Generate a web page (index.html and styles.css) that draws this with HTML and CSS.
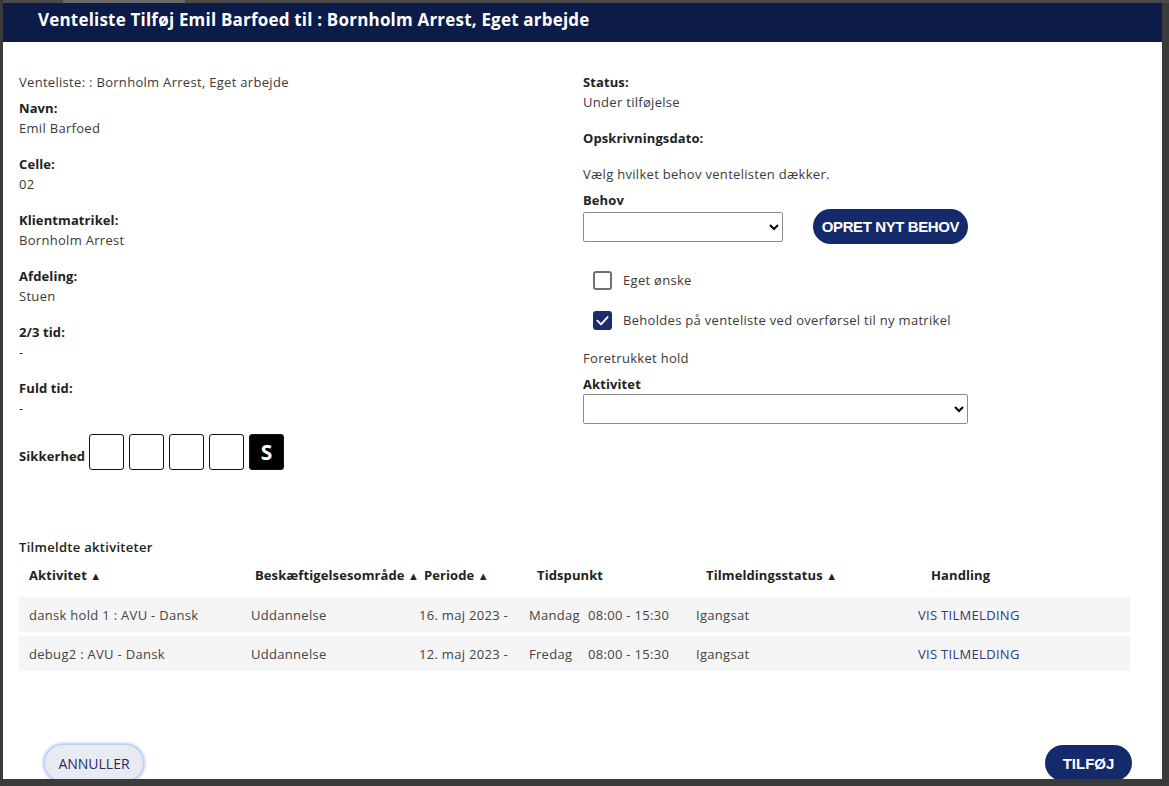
FILE: index.html
```html
<!DOCTYPE html>
<html lang="da">
<head>
<meta charset="utf-8">
<title>Venteliste</title>
<link rel="stylesheet" href="styles.css">
</head>
<body>
<div class="topstrip"><span class="toptab"></span></div>
<div class="modal">
  <div class="modal-header">Venteliste Tilføj Emil Barfoed til : Bornholm Arrest, Eget arbejde</div>
  <div class="modal-body">
    <div class="cols">
      <div class="col-left">
        <div class="intro">Venteliste: : Bornholm Arrest, Eget arbejde</div>
        <div class="field"><div class="label">Navn:</div><div class="value">Emil Barfoed</div></div>
        <div class="field"><div class="label">Celle:</div><div class="value">02</div></div>
        <div class="field"><div class="label">Klientmatrikel:</div><div class="value">Bornholm Arrest</div></div>
        <div class="field"><div class="label">Afdeling:</div><div class="value">Stuen</div></div>
        <div class="field"><div class="label">2/3 tid:</div><div class="value">-</div></div>
        <div class="field"><div class="label">Fuld tid:</div><div class="value">-</div></div>
        <div class="security">
          <span class="label">Sikkerhed</span>
          <span class="sbox"></span><span class="sbox"></span><span class="sbox"></span><span class="sbox"></span><span class="sbox on">S</span>
        </div>
      </div>
      <div class="col-right">
        <div class="field"><div class="label">Status:</div><div class="value">Under tilføjelse</div></div>
        <div class="field"><div class="label">Opskrivningsdato:</div></div>
        <div class="plain">Vælg hvilket behov ventelisten dækker.</div>
        <div class="label lbl-behov">Behov</div>
        <div class="behov-row">
          <select class="select select-behov"><option></option></select>
          <button class="btn btn-primary btn-opret">OPRET NYT BEHOV</button>
        </div>
        <div class="checks">
          <label class="check"><span class="cbox"></span><span>Eget ønske</span></label>
          <label class="check"><span class="cbox checked"><svg viewBox="0 0 20 20" width="20" height="20"><path d="M4.6 10.2 L8.4 14 L15.4 6.4" fill="none" stroke="#fff" stroke-width="2" stroke-linecap="round" stroke-linejoin="round"/></svg></span><span>Beholdes på venteliste ved overførsel til ny matrikel</span></label>
        </div>
        <div class="plain">Foretrukket hold</div>
        <div class="label lbl-akt">Aktivitet</div>
        <select class="select select-akt"><option></option></select>
      </div>
    </div>

    <div class="table-section">
      <div class="table-title">Tilmeldte aktiviteter</div>
      <div class="tbl">
        <div class="tr th">
          <div class="c1">Aktivitet <span class="arrow">▲</span></div>
          <div class="c2">Beskæftigelsesområde <span class="arrow">▲</span></div>
          <div class="c3">Periode <span class="arrow">▲</span></div>
          <div class="c4">Tidspunkt</div>
          <div class="c5">Tilmeldingsstatus <span class="arrow">▲</span></div>
          <div class="c6">Handling</div>
        </div>
        <div class="tr td">
          <div class="c1">dansk hold 1 : AVU - Dansk</div>
          <div class="c2">Uddannelse</div>
          <div class="c3">16. maj 2023 -</div>
          <div class="c4"><span class="day">Mandag</span><span>08:00 - 15:30</span></div>
          <div class="c5">Igangsat</div>
          <div class="c6"><a class="link">VIS TILMELDING</a></div>
        </div>
        <div class="tr td">
          <div class="c1">debug2 : AVU - Dansk</div>
          <div class="c2">Uddannelse</div>
          <div class="c3">12. maj 2023 -</div>
          <div class="c4"><span class="day">Fredag</span><span>08:00 - 15:30</span></div>
          <div class="c5">Igangsat</div>
          <div class="c6"><a class="link">VIS TILMELDING</a></div>
        </div>
      </div>
    </div>

    <div class="footer">
      <button class="btn btn-secondary">ANNULLER</button>
      <button class="btn btn-primary btn-add">TILFØJ</button>
    </div>
  </div>
</div>
</body>
</html>
```
FILE: styles.css
```css
* { box-sizing: border-box; }
html, body { margin: 0; padding: 0; }
body {
  background: #3b3b3b;
  width: 1169px;
  height: 786px;
  overflow: hidden;
  font-family: "Open Sans", Lato, sans-serif;
  font-size: 13px;
  letter-spacing: 0.3px;
  color: #3a3a3a;
  padding: 0 0 0 3px;
}
.topstrip {
  height: 3px;
  background: #4a4a4a;
  display: flex;
}
.toptab {
  margin-left: 60px;
  width: 122px;
  background: #6a6a6a;
}
.modal {
  width: 1159px;
  height: 776px;
  background: #fff;
  overflow: hidden;
  display: flex;
  flex-direction: column;
}
.modal-header {
  height: 39px;
  flex: none;
  background: #0d1b48;
  color: #fff;
  font-weight: 700;
  font-size: 17px;
  letter-spacing: 0.2px;
  line-height: 34px;
  padding-left: 35px;
}
.modal-body {
  padding: 30px 16px 0 16px;
}
.cols {
  display: grid;
  grid-template-columns: 564px 1fr;
}
.intro, .label, .value, .plain { line-height: 20px; }
.label { font-weight: 700; color: #222; letter-spacing: 0.1px; }
.intro { margin-bottom: 6px; }
.field { margin-bottom: 16px; }
.col-left .field:last-of-type { margin-bottom: 18px; }
.security {
  display: flex;
  align-items: center;
  gap: 5px;
}
.security .label { margin-top: 8px; margin-right: -1px; }
.sbox {
  width: 35px;
  height: 36px;
  border: 1px solid #111;
  border-radius: 3px;
  background: #fff;
  display: inline-flex;
  align-items: center;
  justify-content: center;
}
.sbox.on {
  background: #000;
  color: #fff;
  font-weight: 700;
  font-size: 21px;
}
.plain { color: #3a3a3a; }
.lbl-behov { margin-top: 6px; }
.behov-row {
  display: flex;
  align-items: center;
  gap: 30px;
  margin-top: -1px;
}
.select {
  height: 30px;
  border: 1px solid #8a8a8a;
  border-radius: 2px;
  background: #fff;
  font-family: inherit;
  font-size: 13px;
}
.select-behov { width: 200px; }
.select-akt { width: 385px; display: block; }
.btn {
  border: none;
  border-radius: 18px;
  font-family: "Liberation Sans", Arial, sans-serif;
  cursor: pointer;
}
.btn-primary {
  background: #152a6b;
  color: #fff;
  font-weight: 700;
}
.btn-opret {
  width: 155px;
  height: 35px;
  font-size: 15px;
  letter-spacing: -0.4px;
  padding: 0;
}
.checks {
  margin-top: 26px;
  padding-left: 10px;
  display: flex;
  flex-direction: column;
  gap: 20px;
  margin-bottom: 18px;
}
.check {
  display: flex;
  align-items: center;
  gap: 11px;
  line-height: 20px;
  height: 20px;
}
.cbox {
  width: 19px;
  height: 19px;
  border: 2px solid #707070;
  border-radius: 3px;
  background: #fff;
  display: inline-flex;
  align-items: center;
  justify-content: center;
  flex: none;
}
.cbox.checked {
  background: #1b2d6b;
  border-color: #1b2d6b;
}
.cbox svg { width: 19px; height: 19px; flex: none; }
.lbl-akt { margin-top: 6px; }

.table-section {
  margin-top: 67px;
  width: 1111px;
}
.table-title {
  line-height: 20px;
  color: #222;
  font-weight: 600;
}
.tbl {
  display: flex;
  flex-direction: column;
  gap: 4px;
}
.tr {
  display: grid;
  grid-template-columns: 222px 168px 110px 167px 222px 222px;
  align-items: center;
  white-space: nowrap;
}
.th {
  height: 36px;
  font-weight: 700;
  color: #222;
  letter-spacing: 0.1px;
}
.arrow { font-size: 11px; }
.td {
  height: 35px;
  background: #f5f5f5;
  color: #444;
}
.td > div { padding-left: 10px; }
.th .c1 { padding-left: 10px; }
.th .c2 { padding-left: 14px; }
.th .c3 { padding-left: 15px; }
.th .c4 { padding-left: 18px; }
.th .c5 { padding-left: 20px; }
.th .c6 { padding-left: 23px; }
.day { display: inline-block; width: 59px; }
.link { color: #2b3b7c; text-decoration: none; }

.footer {
  margin-top: 74px;
  display: flex;
  justify-content: space-between;
  padding-left: 26px;
  padding-right: 14px;
}
.btn-secondary {
  width: 98px;
  height: 36px;
  background: #e9ebf3;
  color: #1d2c66;
  font-family: "Open Sans", sans-serif;
  font-size: 14px;
  box-shadow: 0 0 3px 2px rgba(110, 150, 235, 0.55);
}
.btn-add {
  width: 87px;
  height: 36px;
  font-size: 15px;
}
```
